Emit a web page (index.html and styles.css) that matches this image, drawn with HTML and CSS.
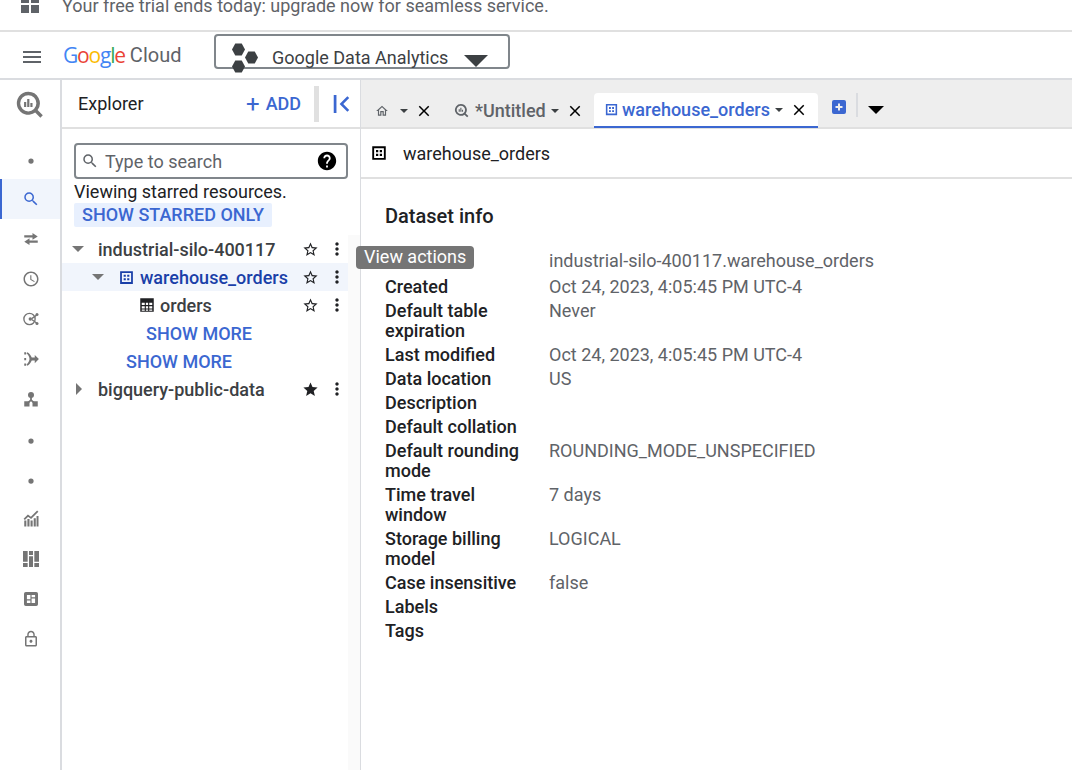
FILE: index.html
```html
<!DOCTYPE html>
<html lang="en">
<head>
    <meta charset="UTF-8">
    <title>BigQuery - warehouse_orders</title>
    <link rel="stylesheet" href="styles.css">
</head>
<body>
    <svg class="icon-defs" width="0" height="0">
        <symbol id="i-search" viewBox="0 0 24 24"><path d="M15.5 14h-.79l-.28-.27A6.471 6.471 0 0 0 16 9.5 6.5 6.5 0 1 0 9.5 16c1.61 0 3.09-.59 4.23-1.57l.27.28v.79l5 4.99L20.49 19l-4.99-5zm-6 0C7.01 14 5 11.99 5 9.5S7.01 5 9.5 5 14 7.01 14 9.5 11.99 14 9.5 14z"/></symbol>
        <symbol id="i-swap" viewBox="0 0 24 24"><path d="M14 4l7 4.500-7 4.500v-3H3V7h11zM10 11l-7 4.500 7 4.500v-3h11v-3H10z"/></symbol>
        <symbol id="i-clock" viewBox="0 0 24 24"><path d="M11.990 2C6.470 2 2 6.480 2 12s4.470 10 9.990 10C17.520 22 22 17.520 22 12S17.520 2 11.990 2zM12 20c-4.420 0-8-3.580-8-8s3.580-8 8-8 8 3.580 8 8-3.580 8-8 8zm.5-13H11v6l5.250 3.150.75-1.230-4.500-2.670z"/></symbol>
        <symbol id="i-star" viewBox="0 0 24 24"><path d="M12 17.270L18.180 21l-1.640-7.030L22 9.240l-7.190-.61L12 2 9.190 8.630 2 9.240l5.460 4.730L5.820 21z"/></symbol>
        <symbol id="i-star-o" viewBox="0 0 24 24"><path d="M22 9.240l-7.190-.62L12 2 9.190 8.630 2 9.240l5.460 4.730L5.820 21 12 17.270 18.180 21l-1.630-7.030L22 9.240zM12 15.400l-3.760 2.270 1-4.280-3.320-2.880 4.380-.38L12 6.100l1.710 4.040 4.380.38-3.320 2.880 1 4.280L12 15.400z"/></symbol>
        <symbol id="i-more" viewBox="0 0 24 24"><path d="M12 8c1.100 0 2-.9 2-2s-.9-2-2-2-2 .9-2 2 .9 2 2 2zm0 2c-1.100 0-2 .9-2 2s.9 2 2 2 2-.9 2-2-.9-2-2-2zm0 6c-1.100 0-2 .9-2 2s.9 2 2 2 2-.9 2-2-.9-2-2-2z"/></symbol>
        <symbol id="i-close" viewBox="0 0 24 24"><path d="M19 6.410L17.590 5 12 10.590 6.410 5 5 6.410 10.590 12 5 17.590 6.410 19 12 13.410 17.590 19 19 17.590 13.410 12z"/></symbol>
        <symbol id="i-help" viewBox="0 0 24 24"><path d="M12 2C6.480 2 2 6.480 2 12s4.480 10 10 10 10-4.480 10-10S17.520 2 12 2zm1 17h-2v-2h2v2zm2.070-7.750l-.9.920C13.450 12.900 13 13.500 13 15h-2v-.5c0-1.100.45-2.100 1.170-2.830l1.240-1.260c.37-.36.59-.86.59-1.410 0-1.100-.9-2-2-2s-2 .9-2 2H8c0-2.210 1.790-4 4-4s4 1.790 4 4c0 .88-.36 1.680-.93 2.250z"/></symbol>
        <symbol id="i-home" viewBox="0 0 24 24"><path d="M12 5.690l5 4.500V18h-2v-6H9v6H7v-7.810l5-4.500M12 3L2 12h3v8h6v-6h2v6h6v-8h3L12 3z"/></symbol>
        <symbol id="i-lock" viewBox="0 0 24 24"><path d="M12 17c1.100 0 2-.9 2-2s-.9-2-2-2-2 .9-2 2 .9 2 2 2zm6-9h-1V6c0-2.760-2.240-5-5-5S7 3.240 7 6v2H6c-1.100 0-2 .9-2 2v10c0 1.100.9 2 2 2h12c1.100 0 2-.9 2-2V10c0-1.100-.9-2-2-2zM8.900 6c0-1.710 1.390-3.100 3.100-3.100s3.100 1.390 3.100 3.100v2H8.900V6zM18 20H6V10h12v10z"/></symbol>
        <symbol id="i-dataset" viewBox="0 0 24 24"><path fill-rule="evenodd" d="M3 3h18v18H3zM5.500 5.500v13h13v-13zM8 8h3v3H8zM13 8h3v3h-3zM8 13h3v3H8zM13 13h3v3h-3z"/></symbol>
        <symbol id="i-table" viewBox="0 0 24 24"><path fill-rule="evenodd" d="M3 3h18v18H3zM5 9v3h4V9zM10.500 9v3h3V9zM15 9v3h4V9zM5 13.500v3h4v-3zM10.500 13.500v3h3v-3zM15 13.500v3h4v-3zM5 18v1.500h4V18zM10.500 18v1.500h3V18zM15 18v1.500h4V18z"/></symbol>
        <symbol id="i-bq" viewBox="0 0 24 24"><path fill-rule="evenodd" d="M11 1.500a9.500 9.500 0 1 0 5.700 17.100l4.300 4.300 2-2-4.300-4.300A9.500 9.500 0 0 0 11 1.500zM11 4.300a6.700 6.700 0 1 1 0 13.400 6.700 6.700 0 0 1 0-13.400z"/><path d="M7.500 10h1.800v4H7.500zM10.100 7.500h1.800v6.500h-1.800zM12.700 10.800h1.800V14h-1.800z"/></symbol>
        <symbol id="i-hex" viewBox="0 0 12 12"><path d="M3 .5h6L12 6 9 11.500H3L0 6z"/></symbol>
        <symbol id="i-dot" viewBox="0 0 24 24"><circle cx="12" cy="12" r="3.500"/></symbol>
        <symbol id="i-connect" viewBox="0 0 24 24"><circle cx="10" cy="12" r="7.500" fill="none" stroke="currentColor" stroke-width="1.800"/><circle cx="11" cy="12" r="2.200"/><path d="M12 11l7-5 1 1.500-7 5zM12 13l7 5 1-1.500-7-5z"/><circle cx="20" cy="6" r="2"/><circle cx="20" cy="18" r="2"/></symbol>
        <symbol id="i-merge" viewBox="0 0 24 24"><path d="M3 3h2.500v3H3zM3 10.500h2.500v3H3zM3 18h2.500v3H3z"/><path d="M7 3c2.500 1 4.500 4 6 7h4V6.500l5.500 5.500-5.500 5.500V14h-4c-1.500 3-3.500 6-6 7l-1-1.800c2.500-1.500 4-5.200 4-7.200s-1.500-5.700-4-7.200z"/></symbol>
        <symbol id="i-tree" viewBox="0 0 24 24"><circle cx="12" cy="6.500" r="4"/><path d="M3 15h7v7H3zM14 15h7v7h-7z"/><path d="M10.800 9h2.400v4l4 3.500-1.500 1.700-3.700-3.200-3.700 3.200-1.500-1.700 4-3.500z"/></symbol>
        <symbol id="i-chart" viewBox="0 0 24 24"><path d="M3 14h2.800v8H3zM7.200 12h2.800v10H7.200zM11.400 14h2.800v8h-2.800zM15.600 11h2.800v11h-2.800zM19.400 8H22v14h-2.600z"/><path d="M3 12.500l5-5 4 3L21 1.500" fill="none" stroke="currentColor" stroke-width="2.400"/></symbol>
        <symbol id="i-dash" viewBox="0 0 24 24"><path d="M0 0h7v16H0zM0 18h7v6H0zM9 0h6v6H9zM9 8h6v16H9zM17 0h7v16h-7zM17 18h7v6h-7z"/></symbol>
        <symbol id="i-report" viewBox="0 0 24 24"><path fill-rule="evenodd" d="M3 0h18a3 3 0 0 1 3 3v18a3 3 0 0 1-3 3H3a3 3 0 0 1-3-3V3a3 3 0 0 1 3-3zM5 5v7.500h6V5zM5 14.500V19h6v-4.500zM13 5v4h6V5zM13 11v8h6v-8z"/></symbol>
    </svg>

    <div class="trial-bar">
        <svg class="trial-icon" viewBox="0 0 18 18"><path d="M0 0h8v8H0zM10 0h8v8h-8zM0 10h8v8H0zM10 10h8v8h-8z"/></svg>
        <span class="trial-text">Your free trial ends today: upgrade now for seamless service.</span>
    </div>

    <header class="app-header">
        <div class="menu-btn"><span></span><span></span><span></span></div>
        <div class="logo">
            <span class="logo-google"><span class="g-blue">G</span><span class="g-red">o</span><span class="g-yellow">o</span><span class="g-blue">g</span><span class="g-green">l</span><span class="g-red">e</span></span>
            <span class="logo-cloud">Cloud</span>
        </div>
        <div class="project-picker">
            <div class="hex-group">
                <svg class="hex hex-a"><use href="#i-hex"/></svg>
                <svg class="hex hex-b"><use href="#i-hex"/></svg>
                <svg class="hex hex-c"><use href="#i-hex"/></svg>
            </div>
            <span class="project-name">Google Data Analytics</span>
            <span class="picker-arrow"></span>
        </div>
    </header>

    <div class="workspace">
        <nav class="rail">
            <div class="rail-top"><svg class="bq-logo"><use href="#i-bq"/></svg></div>
            <div class="rail-item rail-dot"><svg><use href="#i-dot"/></svg></div>
            <div class="rail-item active"><svg><use href="#i-search"/></svg></div>
            <div class="rail-item"><svg><use href="#i-swap"/></svg></div>
            <div class="rail-item"><svg><use href="#i-clock"/></svg></div>
            <div class="rail-item"><svg><use href="#i-connect"/></svg></div>
            <div class="rail-item"><svg><use href="#i-merge"/></svg></div>
            <div class="rail-item"><svg><use href="#i-tree"/></svg></div>
            <div class="rail-item rail-dot"><svg><use href="#i-dot"/></svg></div>
            <div class="rail-item rail-dot"><svg><use href="#i-dot"/></svg></div>
            <div class="rail-item"><svg><use href="#i-chart"/></svg></div>
            <div class="rail-item"><svg class="rail-dash"><use href="#i-dash"/></svg></div>
            <div class="rail-item"><svg class="rail-report"><use href="#i-report"/></svg></div>
            <div class="rail-item"><svg><use href="#i-lock"/></svg></div>
        </nav>

        <aside class="explorer">
            <div class="explorer-head">
                <span class="explorer-title">Explorer</span>
                <span class="add-btn"><span class="add-plus">+</span>ADD</span>
                <span class="head-divider"></span>
                <svg class="collapse-icon" viewBox="0 0 18 22"><path d="M1 1h3v20H1zM16 2.500L18 4.500 11.500 11 18 17.500 16 19.500 7.500 11z"/></svg>
            </div>
            <div class="explorer-search">
                <div class="search-box">
                    <svg class="search-icon"><use href="#i-search"/></svg>
                    <span class="search-text">Type to search</span>
                    <svg class="help-icon"><use href="#i-help"/></svg>
                </div>
                <div class="starred-note">Viewing starred resources.</div>
                <span class="starred-btn">SHOW STARRED ONLY</span>
            </div>
            <div class="tree">
                <div class="tree-rows">
                    <div class="tree-row">
                        <span class="caret down indent-0"></span>
                        <span class="node-name">industrial-silo-400117</span>
                        <svg class="row-star"><use href="#i-star-o"/></svg>
                        <svg class="row-more"><use href="#i-more"/></svg>
                    </div>
                    <div class="tree-row selected">
                        <span class="caret down indent-1"></span>
                        <svg class="node-icon"><use href="#i-dataset"/></svg>
                        <span class="node-name">warehouse_orders</span>
                        <svg class="row-star"><use href="#i-star-o"/></svg>
                        <svg class="row-more"><use href="#i-more"/></svg>
                    </div>
                    <div class="tree-row">
                        <svg class="node-icon table-icon"><use href="#i-table"/></svg>
                        <span class="node-name">orders</span>
                        <svg class="row-star"><use href="#i-star-o"/></svg>
                        <svg class="row-more"><use href="#i-more"/></svg>
                    </div>
                    <div class="tree-row"><span class="show-more level-2">SHOW MORE</span></div>
                    <div class="tree-row"><span class="show-more level-1">SHOW MORE</span></div>
                    <div class="tree-row">
                        <span class="caret right indent-0"></span>
                        <span class="node-name">bigquery-public-data</span>
                        <svg class="row-star"><use href="#i-star"/></svg>
                        <svg class="row-more"><use href="#i-more"/></svg>
                    </div>
                </div>
                <div class="tree-gutter"></div>
            </div>
        </aside>

        <main class="content">
            <div class="tabs">
                <div class="tab tab-home">
                    <svg class="tab-icon"><use href="#i-home"/></svg>
                    <span class="tab-caret"></span>
                    <svg class="tab-close"><use href="#i-close"/></svg>
                </div>
                <div class="tab tab-query">
                    <svg class="tab-icon query-icon"><use href="#i-bq"/></svg>
                    <span class="tab-label">*Untitled</span>
                    <span class="tab-caret"></span>
                    <svg class="tab-close"><use href="#i-close"/></svg>
                </div>
                <div class="tab tab-active">
                    <svg class="tab-icon"><use href="#i-dataset"/></svg>
                    <span class="tab-label">warehouse_orders</span>
                    <span class="tab-caret"></span>
                    <svg class="tab-close"><use href="#i-close"/></svg>
                </div>
                <svg class="tab-add" viewBox="0 0 14 14"><path fill-rule="evenodd" d="M2 0h10a2 2 0 0 1 2 2v10a2 2 0 0 1-2 2H2a2 2 0 0 1-2-2V2a2 2 0 0 1 2-2zM6 3.500v2.500H3.500v2H6v2.500h2V8h2.500V6H8V3.500z"/></svg>
                <span class="tabs-divider"></span>
                <span class="tabs-arrow"></span>
            </div>
            <div class="dataset-bar">
                <svg class="dataset-icon"><use href="#i-dataset"/></svg>
                <span>warehouse_orders</span>
            </div>
            <section class="dataset-info">
                <h2>Dataset info</h2>
                <dl class="info-list">
                    <dt class="first-row">Dataset ID</dt><dd class="first-row">industrial-silo-400117.warehouse_orders</dd>
                    <dt>Created</dt><dd>Oct 24, 2023, 4:05:45 PM UTC-4</dd>
                    <dt>Default table expiration</dt><dd>Never</dd>
                    <dt>Last modified</dt><dd>Oct 24, 2023, 4:05:45 PM UTC-4</dd>
                    <dt>Data location</dt><dd>US</dd>
                    <dt>Description</dt><dd></dd>
                    <dt>Default collation</dt><dd></dd>
                    <dt>Default rounding mode</dt><dd>ROUNDING_MODE_UNSPECIFIED</dd>
                    <dt>Time travel window</dt><dd>7 days</dd>
                    <dt>Storage billing model</dt><dd>LOGICAL</dd>
                    <dt>Case insensitive</dt><dd>false</dd>
                    <dt>Labels</dt><dd></dd>
                    <dt>Tags</dt><dd></dd>
                </dl>
            </section>
        </main>
    </div>

    <div class="tooltip">View actions</div>
</body>
</html>
```

FILE: styles.css
```css
* {
    box-sizing: border-box;
}
html, body {
    height: 100%;
}
body {
    margin: 0;
    width: 1072px;
    height: 770px;
    overflow: hidden;
    position: relative;
    font-family: Roboto, "Liberation Sans", sans-serif;
    font-size: 18px;
    color: #202124;
    background: #fff;
    display: flex;
    flex-direction: column;
}
svg {
    fill: currentColor;
    flex: none;
    display: block;
}
.icon-defs {
    position: absolute;
}

/* top banner, cut off by the top of the window */
.trial-bar {
    height: 32px;
    flex: none;
    overflow: hidden;
    display: flex;
    align-items: flex-start;
    border-bottom: 2px solid #e0e0e0;
    padding-left: 21px;
    color: #5f6368;
}
.trial-icon {
    width: 18px;
    height: 18px;
    margin-top: -5px;
    color: #5f6368;
}
.trial-text {
    margin-left: 23px;
    margin-top: -5px;
    line-height: 22px;
}

.app-header {
    height: 48px;
    flex: none;
    display: flex;
    align-items: flex-start;
    border-bottom: 2px solid #dadce0;
}
.menu-btn {
    width: 18px;
    margin: 19px 0 0 23px;
    display: flex;
    flex-direction: column;
    gap: 3px;
}
.menu-btn span {
    height: 2px;
    background: #5f6368;
}
.logo {
    margin: 11px 0 0 22px;
    width: 151px;
    display: flex;
    gap: 4px;
    font-size: 20px;
    line-height: 24px;
}
.logo-google {
    font-family: "Open Sans", sans-serif;
    font-weight: 500;
    font-size: 21px;
    letter-spacing: -1.2px;
    margin-right: 1px;
}
.logo-cloud {
    color: #5f6368;
}
.g-blue { color: #4285f4; }
.g-red { color: #ea4335; }
.g-yellow { color: #fbbc04; }
.g-green { color: #34a853; }

.project-picker {
    width: 296px;
    height: 35px;
    margin-top: 2px;
    border: 2px solid #80868b;
    border-radius: 4px;
    display: flex;
    align-items: flex-start;
    position: relative;
    color: #3c4043;
}
.hex-group {
    position: absolute;
    left: 16px;
    top: 7px;
    width: 26px;
    height: 30px;
}
.hex {
    position: absolute;
    width: 13px;
    height: 13px;
    color: #3c4043;
}
.hex-a { left: 0; top: 0; }
.hex-b { left: 13px; top: 8px; }
.hex-c { left: 0; top: 17px; }
.project-name {
    margin: 12px 0 0 56px;
    line-height: 20px;
}
.picker-arrow {
    margin: 19px 0 0 16px;
    border-left: 12px solid transparent;
    border-right: 12px solid transparent;
    border-top: 12px solid #3c4043;
}

.workspace {
    flex: 1;
    display: flex;
    min-height: 0;
}

/* left icon rail */
.rail {
    width: 62px;
    flex: none;
    border-right: 2px solid #dadce0;
    color: #757575;
}
.rail-top {
    height: 59px;
    display: flex;
    justify-content: center;
    padding: 10px 2px 0 0;
}
.bq-logo {
    width: 29px;
    height: 29px;
}
.rail-item {
    height: 40px;
    display: flex;
    align-items: center;
    justify-content: center;
    padding-left: 2px;
}
.rail-item svg {
    width: 18px;
    height: 18px;
}
.rail-item .rail-dash {
    width: 16px;
    height: 16px;
}
.rail-item .rail-report {
    width: 14px;
    height: 14px;
}
.rail-dot {
    padding-top: 4px;
}
.rail-item.active {
    background: #f1f5fc;
    border-left: 2px solid #3b67d1;
    color: #3b67d1;
    padding-left: 0;
}

/* explorer panel */
.explorer {
    width: 299px;
    flex: none;
    display: flex;
    flex-direction: column;
    border-right: 1px solid #dadce0;
}
.explorer-head {
    height: 49px;
    flex: none;
    display: flex;
    align-items: center;
    border-bottom: 2px solid #e0e0e0;
    padding-left: 16px;
}
.explorer-title {
    width: 168px;
    color: #202124;
}
.add-btn {
    color: #3b67d1;
    font-weight: 500;
    width: 68px;
    display: flex;
    align-items: center;
}
.add-plus {
    font-size: 24px;
    font-weight: 400;
    line-height: 18px;
    margin-right: 6px;
}
.head-divider {
    width: 5px;
    height: 36px;
    margin-right: 13px;
    background: #e0e0e0;
}
.collapse-icon {
    width: 18px;
    height: 20px;
    color: #3b67d1;
}
.explorer-search {
    padding: 14px 12px 0;
    flex: none;
}
.search-box {
    height: 36px;
    border: 2px solid #80868b;
    border-radius: 4px;
    display: flex;
    align-items: center;
    padding: 0 8px 0 5px;
    color: #5f6368;
}
.search-icon {
    width: 18px;
    height: 18px;
}
.search-text {
    flex: 1;
    margin-left: 6px;
    padding-top: 1px;
}
.help-icon {
    width: 22px;
    height: 22px;
    color: #000;
}
.starred-note {
    line-height: 22px;
    margin-top: 2px;
    color: #202124;
}
.starred-btn {
    display: block;
    width: fit-content;
    background: #e8f0fe;
    color: #3b67d1;
    font-weight: 500;
    line-height: 24px;
    padding: 0 8px;
    border-radius: 2px;
}
.tree {
    flex: 1;
    display: flex;
    margin-top: 8px;
    min-height: 0;
}
.tree-rows {
    width: 286px;
    flex: none;
}
.tree-gutter {
    flex: 1;
    background: #fafafa;
}
.tree-row {
    height: 28px;
    display: flex;
    align-items: center;
    position: relative;
    padding-right: 1px;
    font-weight: 500;
    color: #3c4043;
}
.tree-row.selected {
    background: #f1f5fc;
}
.tree-row.selected .node-name {
    color: #1a3fa8;
}
.caret {
    flex: none;
    margin-right: 14px;
}
.caret.down {
    border-left: 6px solid transparent;
    border-right: 6px solid transparent;
    border-top: 6px solid #757575;
}
.caret.right {
    border-top: 6px solid transparent;
    border-bottom: 6px solid transparent;
    border-left: 6px solid #757575;
    margin-right: 16px;
}
.indent-0 {
    margin-left: 10px;
}
.caret.right.indent-0 {
    margin-left: 14px;
}
.caret.indent-1 {
    margin-left: 30px;
}
.node-icon {
    width: 17px;
    height: 17px;
    color: #1a3fa8;
    margin-right: 5px;
}
.table-icon {
    width: 18px;
    height: 18px;
    color: #202124;
    margin-left: 76px;
    margin-right: 4px;
}
.node-name {
    flex: 1;
    white-space: nowrap;
}
.row-star {
    width: 17px;
    height: 17px;
    color: #202124;
    margin-right: 8px;
}
.row-more {
    width: 20px;
    height: 20px;
    color: #202124;
}
.show-more {
    color: #3b67d1;
    font-weight: 500;
}
.level-2 {
    margin-left: 84px;
}
.level-1 {
    margin-left: 64px;
}

/* main area */
.content {
    flex: 1;
    min-width: 0;
}
.tabs {
    height: 49px;
    background: #eeeeee;
    border-bottom: 2px solid #e0e0e0;
    display: flex;
    align-items: flex-start;
    padding: 13px 0 0 14px;
}
.tab {
    height: 35px;
    display: flex;
    align-items: center;
    color: #5f6368;
    font-weight: 500;
}
.tab-home {
    width: 79px;
}
.tab-home .tab-caret {
    margin-left: 11px;
}
.tab-query {
    width: 140px;
}
.tab-active {
    width: 224px;
    background: #fff;
    border-bottom: 2px solid #3b67d1;
    border-radius: 4px 4px 0 0;
    color: #3b67d1;
    padding-left: 10px;
}
.tab-icon {
    width: 14px;
    height: 14px;
    color: #5f6368;
}
.tab-active .tab-icon {
    width: 15px;
    height: 15px;
    color: #3b67d1;
}
.query-icon {
    width: 15px;
    height: 15px;
}
.tab-label {
    margin-left: 3px;
    margin-top: -1px;
}
.query-icon + .tab-label {
    margin-left: 6px;
}
.tab-caret {
    margin-left: 5px;
    border-left: 4px solid transparent;
    border-right: 4px solid transparent;
    border-top: 4px solid #3c4043;
}
.tab-close {
    width: 18px;
    height: 18px;
    margin-left: 7px;
    color: #000;
}
.tab-add {
    width: 14px;
    height: 14px;
    margin: 7px 0 0 14px;
    color: #3b67d1;
}
.tabs-divider {
    width: 2px;
    height: 24px;
    margin-left: 10px;
    background: #dadce0;
}
.tabs-arrow {
    margin: 13px 0 0 10px;
    border-left: 8px solid transparent;
    border-right: 8px solid transparent;
    border-top: 8px solid #000;
}
.dataset-bar {
    height: 50px;
    border-bottom: 2px solid #e0e0e0;
    display: flex;
    align-items: center;
    padding: 0 0 0 9px;
    color: #202124;
}
.dataset-icon {
    width: 18px;
    height: 18px;
    margin-right: 15px;
    color: #000;
}
.dataset-info {
    padding: 25px 0 0 24px;
}
.dataset-info h2 {
    margin: 0 0 21px;
    font-size: 20px;
    line-height: 24px;
    font-weight: 500;
    color: #202124;
}
.info-list {
    margin: 0;
    display: grid;
    grid-template-columns: 164px 1fr;
    line-height: 20px;
}
.info-list dt {
    padding: 2px 20px 2px 0;
    font-weight: 500;
    color: #202124;
}
.info-list dd {
    margin: 0;
    padding: 2px 0;
    color: #5f6368;
}
.info-list .first-row {
    padding-bottom: 4px;
}

.tooltip {
    position: absolute;
    left: 356px;
    top: 246px;
    width: 118px;
    height: 23px;
    border-radius: 4px;
    background: #757575;
    color: #fff;
    line-height: 22px;
    padding-left: 8px;
}
```
